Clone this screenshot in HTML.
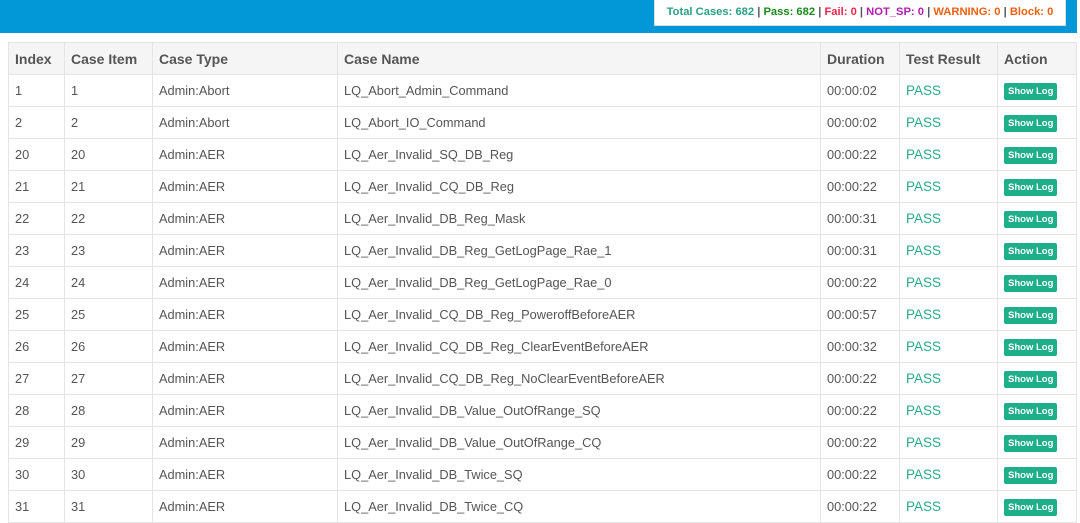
<!DOCTYPE html>
<html><head><style>
body{margin:0;width:1080px;height:515px;overflow:hidden;background:#fff;font-family:"Liberation Sans",sans-serif;}
.top{position:absolute;left:0;top:0;width:1077px;height:33px;background:#0298d8;}
.sum{position:absolute;left:654px;top:0;width:410px;height:25px;background:#fff;border:1px solid #ddd;border-top:none;font-size:11.2px;font-weight:bold;line-height:24px;text-align:center;color:#555}
table{position:absolute;left:8px;top:42px;border-collapse:collapse;table-layout:fixed;font-size:12.8px;color:#555;width:1069px}
td,th{border:1px solid #e4e4e4;height:31px;padding:0 0 0 6px;text-align:left;white-space:nowrap;overflow:hidden}
th{background:#f5f5f5;font-size:14px;font-weight:bold;color:#555}
.p{color:#2aa988;font-size:13.5px}
.b{display:inline-block;background:#1fae8a;color:#fff;font-size:9.5px;font-weight:bold;padding:3px 4px;border-radius:2px}
</style></head><body>
<div class="top"></div>
<div class="sum"><span style="color:#2aa085">Total Cases: 682</span> | <span style="color:#1a8a1a">Pass: 682</span> | <span style="color:#f0244a">Fail: 0</span> | <span style="color:#b020b0">NOT_SP: 0</span> | <span style="color:#f06010">WARNING: 0</span> | <span style="color:#f06010">Block: 0</span></div>
<table>
<colgroup><col style="width:56px"><col style="width:88px"><col style="width:185px"><col style="width:483px"><col style="width:79px"><col style="width:98px"><col></colgroup>
<tr><th>Index</th><th>Case Item</th><th>Case Type</th><th>Case Name</th><th>Duration</th><th>Test Result</th><th>Action</th></tr>
<tr><td>1</td><td>1</td><td>Admin:Abort</td><td>LQ_Abort_Admin_Command</td><td>00:00:02</td><td class="p">PASS</td><td><span class="b">Show Log</span></td></tr>
<tr><td>2</td><td>2</td><td>Admin:Abort</td><td>LQ_Abort_IO_Command</td><td>00:00:02</td><td class="p">PASS</td><td><span class="b">Show Log</span></td></tr>
<tr><td>20</td><td>20</td><td>Admin:AER</td><td>LQ_Aer_Invalid_SQ_DB_Reg</td><td>00:00:22</td><td class="p">PASS</td><td><span class="b">Show Log</span></td></tr>
<tr><td>21</td><td>21</td><td>Admin:AER</td><td>LQ_Aer_Invalid_CQ_DB_Reg</td><td>00:00:22</td><td class="p">PASS</td><td><span class="b">Show Log</span></td></tr>
<tr><td>22</td><td>22</td><td>Admin:AER</td><td>LQ_Aer_Invalid_DB_Reg_Mask</td><td>00:00:31</td><td class="p">PASS</td><td><span class="b">Show Log</span></td></tr>
<tr><td>23</td><td>23</td><td>Admin:AER</td><td>LQ_Aer_Invalid_DB_Reg_GetLogPage_Rae_1</td><td>00:00:31</td><td class="p">PASS</td><td><span class="b">Show Log</span></td></tr>
<tr><td>24</td><td>24</td><td>Admin:AER</td><td>LQ_Aer_Invalid_DB_Reg_GetLogPage_Rae_0</td><td>00:00:22</td><td class="p">PASS</td><td><span class="b">Show Log</span></td></tr>
<tr><td>25</td><td>25</td><td>Admin:AER</td><td>LQ_Aer_Invalid_CQ_DB_Reg_PoweroffBeforeAER</td><td>00:00:57</td><td class="p">PASS</td><td><span class="b">Show Log</span></td></tr>
<tr><td>26</td><td>26</td><td>Admin:AER</td><td>LQ_Aer_Invalid_CQ_DB_Reg_ClearEventBeforeAER</td><td>00:00:32</td><td class="p">PASS</td><td><span class="b">Show Log</span></td></tr>
<tr><td>27</td><td>27</td><td>Admin:AER</td><td>LQ_Aer_Invalid_CQ_DB_Reg_NoClearEventBeforeAER</td><td>00:00:22</td><td class="p">PASS</td><td><span class="b">Show Log</span></td></tr>
<tr><td>28</td><td>28</td><td>Admin:AER</td><td>LQ_Aer_Invalid_DB_Value_OutOfRange_SQ</td><td>00:00:22</td><td class="p">PASS</td><td><span class="b">Show Log</span></td></tr>
<tr><td>29</td><td>29</td><td>Admin:AER</td><td>LQ_Aer_Invalid_DB_Value_OutOfRange_CQ</td><td>00:00:22</td><td class="p">PASS</td><td><span class="b">Show Log</span></td></tr>
<tr><td>30</td><td>30</td><td>Admin:AER</td><td>LQ_Aer_Invalid_DB_Twice_SQ</td><td>00:00:22</td><td class="p">PASS</td><td><span class="b">Show Log</span></td></tr>
<tr><td>31</td><td>31</td><td>Admin:AER</td><td>LQ_Aer_Invalid_DB_Twice_CQ</td><td>00:00:22</td><td class="p">PASS</td><td><span class="b">Show Log</span></td></tr>
</table>
</body></html>
